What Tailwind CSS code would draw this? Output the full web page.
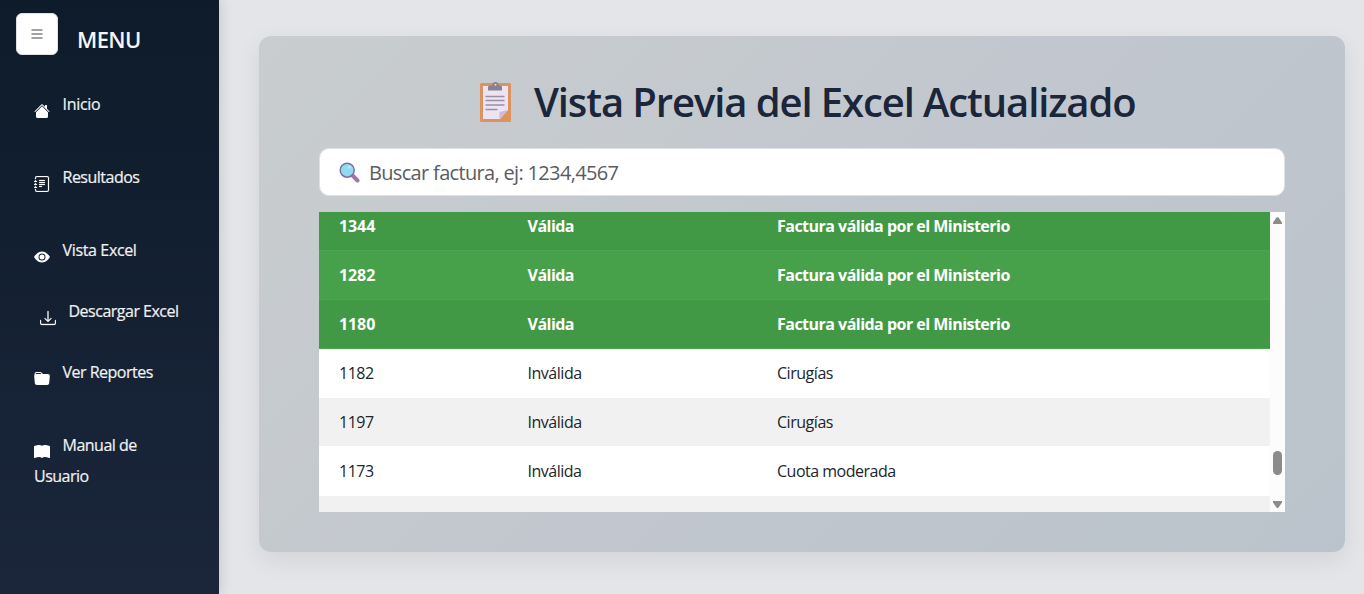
<!DOCTYPE html>
<html lang="es">
<head>
<meta charset="utf-8">
<title>Vista Previa</title>
<script src="https://cdn.jsdelivr.net/npm/@tailwindcss/browser@4"></script>
</head>
<body class="flex h-[594px] w-[1364px] overflow-hidden bg-[#e4e5e9] font-['Open_Sans','Noto_Sans',sans-serif] text-[#212529]">
<aside class="relative z-10 h-full w-[219px] shrink-0 bg-linear-to-b from-[#0d1b2a] to-[#1b263b] text-[#f1f1f1] shadow-[2px_0_12px_rgba(0,0,0,0.12)]">
  <header class="flex h-[68px] pt-[13px] pl-4">
    <button class="flex size-[42px] items-center justify-center rounded-md border border-[#dee2e6] bg-white" aria-label="Menu">
      <svg class="size-3" viewBox="0 0 12 12" fill="#a2a2a4"><path d="M.5 1h11v2H.5zM.5 5h11v2H.5zM.5 9h11v2H.5z"/></svg>
    </button>
    <h2 class="mt-[9px] ml-[19px] text-[22px] leading-[34px] font-semibold tracking-[-0.6px] text-[#f5f5f5]">MENU</h2>
  </header>
  <nav class="pt-[21px] pl-[34px] text-base leading-[31px] tracking-[-0.5px] [-webkit-text-stroke:0.2px_#f1f1f1]">
    <a class="flex h-[73px] gap-[12.5px]"><svg class="mt-[14px] size-4" viewBox="0 0 16 16" fill="#fff"><path d="M8.707 1.5a1 1 0 0 0-1.414 0L.646 8.146a.5.5 0 0 0 .708.708L8 2.207l6.646 6.647a.5.5 0 0 0 .708-.708L13 5.793V2.5a.5.5 0 0 0-.5-.5h-1a.5.5 0 0 0-.5.5v1.293z"/><path d="m8 3.293 6 6V13.500a1.500 1.500 0 0 1-1.500 1.500h-9A1.500 1.500 0 0 1 2 13.500V9.293z"/></svg><span class="tracking-[-0.3px]">Inicio</span></a>
    <a class="flex h-[73px] gap-[12.5px]"><svg class="mt-[14px] size-4" viewBox="0 0 16 16" fill="#fff" stroke="#fff" stroke-width=".2"><path d="M5 10.500a.5.5 0 0 1 .5-.5h2a.5.5 0 0 1 0 1h-2a.5.5 0 0 1-.5-.5m0-2a.5.5 0 0 1 .5-.5h5a.5.5 0 0 1 0 1h-5a.5.5 0 0 1-.5-.5m0-2a.5.5 0 0 1 .5-.5h5a.5.5 0 0 1 0 1h-5a.5.5 0 0 1-.5-.5m0-2a.5.5 0 0 1 .5-.5h5a.5.5 0 0 1 0 1h-5a.5.5 0 0 1-.5-.5"/><path d="M3 0h10a2 2 0 0 1 2 2v12a2 2 0 0 1-2 2H3a2 2 0 0 1-2-2v-1h1v1a1 1 0 0 0 1 1h10a1 1 0 0 0 1-1V2a1 1 0 0 0-1-1H3a1 1 0 0 0-1 1v1H1V2a2 2 0 0 1 2-2"/><path d="M1 5v-.5a.5.5 0 0 1 1 0V5h.5a.5.5 0 0 1 0 1h-2a.5.5 0 0 1 0-1zm0 3v-.5a.5.5 0 0 1 1 0V8h.5a.5.5 0 0 1 0 1h-2a.5.5 0 0 1 0-1zm0 3v-.5a.5.5 0 0 1 1 0v.5h.5a.5.5 0 0 1 0 1h-2a.5.5 0 0 1 0-1z"/></svg><span>Resultados</span></a>
    <a class="flex h-[61px] gap-[12.5px]"><svg class="mt-[14px] size-4" viewBox="0 0 16 16" fill="#fff"><path d="M10.500 8a2.500 2.500 0 1 1-5 0 2.500 2.500 0 0 1 5 0"/><path d="M0 8s3-5.500 8-5.500S16 8 16 8s-3 5.500-8 5.500S0 8 0 8m8 3.500a3.500 3.500 0 1 0 0-7 3.500 3.500 0 0 0 0 7"/></svg><span class="tracking-[-0.35px]">Vista Excel</span></a>
    <a class="flex h-[61px] gap-[12.5px] pl-1.5"><svg class="mt-[14px] size-4" viewBox="0 0 16 16" fill="#fff" stroke="#fff" stroke-width=".3"><path d="M.5 9.900a.5.5 0 0 1 .5.5v2.500a1 1 0 0 0 1 1h12a1 1 0 0 0 1-1v-2.500a.5.5 0 0 1 1 0v2.500a2 2 0 0 1-2 2H2a2 2 0 0 1-2-2v-2.500a.5.5 0 0 1 .5-.5"/><path d="M7.646 11.854a.5.5 0 0 0 .708 0l3-3a.5.5 0 0 0-.708-.708L8.500 10.293V1.500a.5.5 0 0 0-1 0v8.793L5.354 8.146a.5.5 0 1 0-.708.708z"/></svg><span>Descargar Excel</span></a>
    <a class="flex h-[73px] gap-[12.5px]"><svg class="mt-[14px] size-4" viewBox="0 0 16 16" fill="#fff"><path d="M9.828 3h3.982a2 2 0 0 1 1.992 2.181l-.637 7A2 2 0 0 1 13.174 14H2.825a2 2 0 0 1-1.991-1.819l-.637-7a2 2 0 0 1 .342-1.310L.5 3a2 2 0 0 1 2-2h3.672a2 2 0 0 1 1.414.586l.828.828A2 2 0 0 0 9.828 3m-8.322.120q.322-.119.684-.120h5.396l-.707-.707A1 1 0 0 0 6.172 2H2.500a1 1 0 0 0-1 .981z"/></svg><span>Ver Reportes</span></a>
    <a class="block"><span class="flex gap-[12.5px]"><svg class="mt-[14px] size-4" viewBox="0 0 16 16" fill="#fff"><path d="M8 1.783C7.015.936 5.587.810 4.287.940c-1.514.153-3.042.672-3.994 1.105A.5.5 0 0 0 0 2.500v11a.5.5 0 0 0 .707.455c.882-.400 2.303-.881 3.680-1.020 1.409-.142 2.590.087 3.223.877a.5.5 0 0 0 .780 0c.633-.790 1.814-1.019 3.222-.877 1.378.139 2.800.620 3.681 1.020A.5.5 0 0 0 16 13.500v-11a.5.5 0 0 0-.293-.455c-.952-.433-2.480-.952-3.994-1.105C10.413.809 8.985.936 8 1.783"/></svg><span>Manual de</span></span><span class="block">Usuario</span></a>
  </nav>
</aside>
<main class="pt-9 pl-10">
  <section class="h-[516px] w-[1086px] rounded-xl bg-linear-135 from-[#c9cdce] via-[#c2c7cf] to-[#bac3cb] px-[60px] pt-9 shadow-[0_8px_24px_rgba(0,0,0,0.08)]">
    <h1 class="flex h-[60px] items-center pl-[160px] text-[40px] leading-[60px] font-semibold text-[#1b263b]">
      <svg class="mr-[21px] h-[42px] w-[34px] shrink-0" viewBox="0 0 34 42"><rect x="1" y="2" width="31" height="39" rx="1.500" fill="#dc935d"/><path d="M4 5h25v24l-8 9H4z" fill="#ece4f5"/><path d="M20.500 38v-7l8.500-2z" fill="#c8bcd8"/><path d="M9 9.500V6q0-1.500 2-1.500h2Q13.500 1 16.500 1T20 4.500h1q2 0 2 1.500v3.500z" fill="#8c808e"/><circle cx="16.500" cy="3.700" r="1" fill="#ddd"/><path d="M6.500 15.500h19M6.500 19.500h19M6.500 24h19M6.500 28.500h12" stroke="#998ea3" stroke-width="1.500"/></svg>
      <span class="whitespace-nowrap tracking-[-1.1px]">Vista Previa del Excel Actualizado</span>
    </h1>
    <div class="mt-4 flex h-12 items-center rounded-[10px] border border-[#dee2e6] bg-white pl-[19px] text-xl tracking-[-0.67px] text-[#595c5f]">
      <svg class="mr-[9px] size-[21px]" viewBox="0 0 21 21"><path d="m13.500 13.500 5 5" stroke="#a476a8" stroke-width="4" stroke-linecap="round"/><circle cx="8.200" cy="8.200" r="7" fill="#8edcf1" stroke="#7d70a0" stroke-width="1.500"/><circle cx="10.500" cy="5" r="1.600" fill="#b5eafa"/></svg>
      <span class="pt-0.5">Buscar factura, ej: 1234,4567</span>
    </div>
    <div class="mt-4 flex h-[300px] overflow-hidden bg-white text-base">
      <div class="w-[951px]">
        <div class="grid h-[39px] grid-cols-[188.500px_249.500px_1fr] border-b border-[#4ca650] bg-[#429945] pl-5 leading-[29px] font-bold tracking-[-0.52px] text-white"><span class="tracking-[-0.1px]">1344</span><span>Válida</span><span>Factura válida por el Ministerio</span></div>
        <div class="grid h-[49px] grid-cols-[188.500px_249.500px_1fr] border-b border-[#4ca650] bg-[#47a14a] pl-5 leading-[49px] font-bold tracking-[-0.52px] text-white"><span class="tracking-[-0.1px]">1282</span><span>Válida</span><span>Factura válida por el Ministerio</span></div>
        <div class="grid h-[49px] grid-cols-[188.500px_249.500px_1fr] border-b border-[#4ca650] bg-[#429945] pl-5 leading-[49px] font-bold tracking-[-0.52px] text-white"><span class="tracking-[-0.1px]">1180</span><span>Válida</span><span>Factura válida por el Ministerio</span></div>
        <div class="grid h-[49px] grid-cols-[188.500px_249.500px_1fr] bg-white pl-5 leading-[49px] tracking-[-0.47px]"><span>1182</span><span>Inválida</span><span>Cirugías</span></div>
        <div class="grid h-12 grid-cols-[188.500px_249.500px_1fr] bg-[#f1f1f1] pl-5 leading-[49px] tracking-[-0.47px]"><span>1197</span><span>Inválida</span><span>Cirugías</span></div>
        <div class="grid h-[50px] grid-cols-[188.500px_249.500px_1fr] bg-white pl-5 leading-[51px] tracking-[-0.5px]"><span>1173</span><span>Inválida</span><span>Cuota moderada</span></div>
        <div class="h-4 bg-[#f1f1f1]"></div>
      </div>
      <div class="flex w-[15px] flex-col items-center bg-[#fcfcfc] pt-[5px]">
        <svg class="h-[7px] w-[9px]" viewBox="0 0 9 7" fill="#8b8b8b"><path d="M3.500.500q1-1 2 0L9 5.500V7H0V5.500z"/></svg>
        <div class="mt-[227px] h-6 w-[9px] rounded-full bg-[#8b8b8b]"></div>
        <svg class="mt-[26px] h-[7px] w-[9px]" viewBox="0 0 9 7" fill="#8b8b8b"><path d="M0 0h9v1.500l-3.500 5q-1 1-2 0L0 1.500z"/></svg>
      </div>
    </div>
  </section>
</main>
</body>
</html>
